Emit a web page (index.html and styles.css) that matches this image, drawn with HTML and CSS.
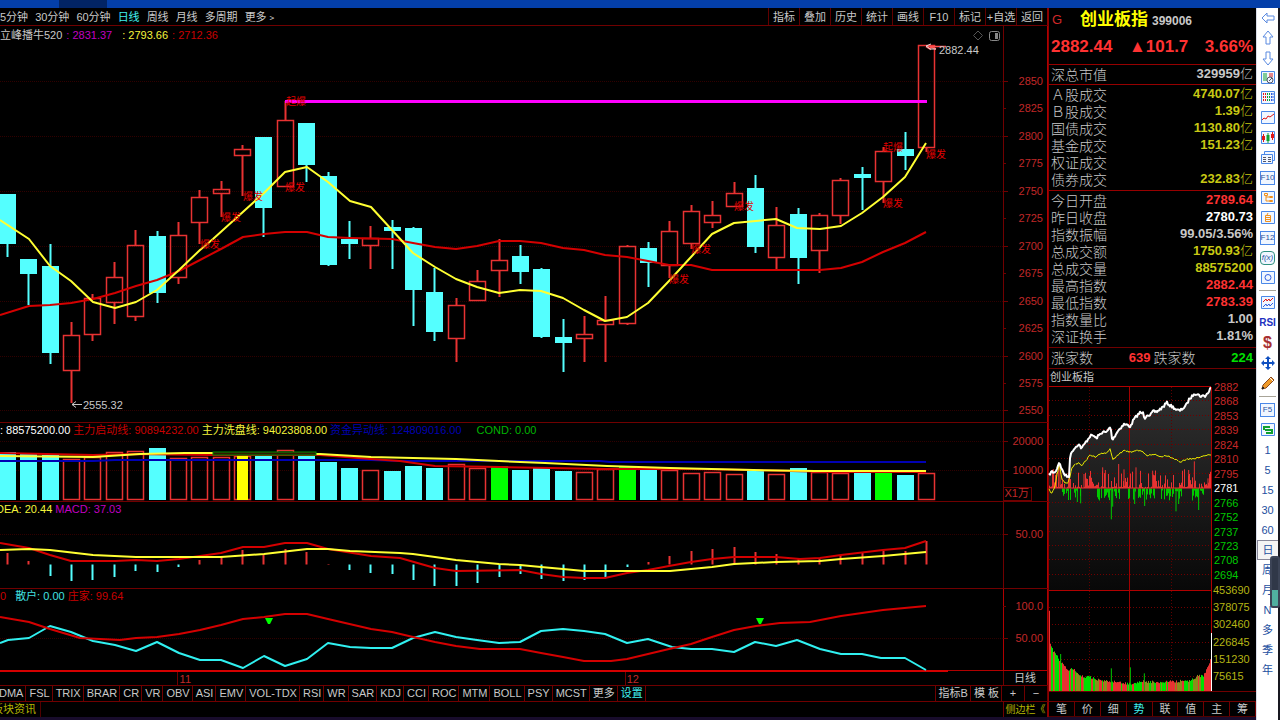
FILE: index.html
```html
<!DOCTYPE html>
<html lang="zh-CN">
<head>
<meta charset="utf-8">
<title>创业板指 399006</title>
<link rel="stylesheet" href="styles.css">
</head>
<body>
<header class="titlebar"><span class="titlebar-slot"></span></header>
<div class="workspace">
  <main class="charts">
    <nav class="topbar">
      <div class="periods">
        <button>5分钟</button><button>30分钟</button><button>60分钟</button><button class="active">日线</button><button>周线</button><button>月线</button><button>多周期</button><button>更多﹥</button>
      </div>
      <div class="tools">
        <button>指标</button><button>叠加</button><button>历史</button><button>统计</button><button>画线</button><button>F10</button><button>标记</button><button>+自选</button><button>返回</button>
      </div>
    </nav>

    <section class="panel">
      <div class="legend first"><span class="gray">立峰播牛520</span><span class="magenta">: 2831.37</span><span class="yellow wide">: 2793.66</span><span class="red">: 2712.36</span></div>
      <svg id="kline" viewBox="0 26 1048 396"></svg>
    </section>
    <section class="panel">
      <div class="legend"><span class="white">: 88575200.00</span><span class="red">主力启动线: 90894232.00</span><span class="yellow">主力洗盘线: 94023808.00</span><span class="blue">资金异动线: 124809016.00</span><span class="green wide">COND: 0.00</span></div>
      <svg id="volume" viewBox="0 422 1048 79"></svg>
    </section>
    <section class="panel">
      <div class="legend"><span class="yellow cut">DEA: 20.44</span><span class="magenta">MACD: 37.03</span></div>
      <svg id="macd" viewBox="0 501 1048 87"></svg>
    </section>
    <section class="panel">
      <div class="legend"><span class="red">0</span><span class="cyan near">散户: 0.00</span><span class="red">庄家: 99.64</span></div>
      <svg id="holders" viewBox="0 588 1048 97"></svg>
    </section>

    <nav class="indicators">
      <button class="cut">DMA</button><button>FSL</button><button>TRIX</button><button>BRAR</button><button>CR</button><button>VR</button><button>OBV</button><button>ASI</button><button>EMV</button><button>VOL-TDX</button><button>RSI</button><button>WR</button><button>SAR</button><button>KDJ</button><button>CCI</button><button>ROC</button><button>MTM</button><button>BOLL</button><button>PSY</button><button>MCST</button><button>更多</button><button class="active">设置</button>
      <span class="spacer"></span>
      <button class="start">指标B</button><button>模 板</button><button class="zoom">+</button><button class="zoom">−</button>
    </nav>
    <div class="status"><button class="news">板块资讯</button><button class="side">侧边栏《</button></div>
  </main>

  <aside class="quote">
    <div class="name"><span class="flag">G</span><h1>创业板指</h1><span class="code">399006</span></div>
    <div class="price"><span>2882.44</span><span>▲101.7</span><span>3.66%</span></div>
    <table class="rows">
      <tr><th>深总市值</th><td class="gray">329959<i>亿</i></td></tr>
    </table>
    <table class="rows six">
      <tr><th>Ａ股成交</th><td class="gold">4740.07<i>亿</i></td></tr>
      <tr><th>Ｂ股成交</th><td class="gold">1.39<i>亿</i></td></tr>
      <tr><th>国债成交</th><td class="gold">1130.80<i>亿</i></td></tr>
      <tr><th>基金成交</th><td class="gold">151.23<i>亿</i></td></tr>
      <tr><th>权证成交</th><td></td></tr>
      <tr><th>债券成交</th><td class="gold">232.83<i>亿</i></td></tr>
    </table>
    <table class="rows nine">
      <tr><th>今日开盘</th><td class="up">2789.64</td></tr>
      <tr><th>昨日收盘</th><td class="white">2780.73</td></tr>
      <tr><th>指数振幅</th><td class="gray">99.05/3.56%</td></tr>
      <tr><th>总成交额</th><td class="gold">1750.93<i>亿</i></td></tr>
      <tr><th>总成交量</th><td class="gold">88575200</td></tr>
      <tr><th>最高指数</th><td class="up">2882.44</td></tr>
      <tr><th>最低指数</th><td class="up">2783.39</td></tr>
      <tr><th>指数量比</th><td class="gray">1.00</td></tr>
      <tr><th>深证换手</th><td class="gray">1.81%</td></tr>
    </table>
    <div class="breadth"><span>涨家数</span><b class="up">639</b><span>跌家数</span><b class="down">224</b></div>
    <h2>创业板指</h2>
    <svg id="intraday" viewBox="1049 386 207 315"></svg>
    <nav class="views">
      <button>笔</button><button>价</button><button>细</button><button class="active">势</button><button>联</button><button>值</button><button>主</button><button>筹</button>
    </nav>
  </aside>

  <nav class="toolbar">
    <button aria-label="后退"><svg viewBox="0 0 16 16"><path d="M2 8l5-5v3h7v4H7v3z"/></svg></button>
    <button aria-label="上移"><svg viewBox="0 0 16 16"><path d="M8 1l5 6h-3v7H6V7H3z"/></svg></button>
    <button aria-label="下移"><svg viewBox="0 0 16 16"><path d="M8 15l5-6h-3V2H6v7H3z"/></svg></button>
    <button aria-label="报价设置"><svg viewBox="0 0 16 16"><path class="frame" d="M1.500 1.500h13v12h-13z"/><path class="g" d="M3 4h4M3 6h4M3 8h4M3 10h4"/><path class="r" d="M9 4h4M9 6h4"/><circle class="k" cx="10" cy="10" r="3"/><path class="k" d="M9 11l3-3"/></svg></button>
    <button aria-label="报价表"><svg viewBox="0 0 16 16"><path class="frame" d="M1.500 1.500h13v12h-13z"/><path class="r dash" d="M3.500 3v9M5.500 3v9"/><path class="g dash" d="M7.500 3v9M9.500 3v9"/><path class="b dash" d="M11.500 3v9M13 3v9"/></svg></button>
    <button aria-label="分时图"><svg viewBox="0 0 16 16"><path class="frame" d="M1.500 1.500h13v12h-13z"/><path class="r" d="M2 10l2-2 2 1 2-3 2 1 4-3"/></svg></button>
    <button aria-label="K线图"><svg viewBox="0 0 16 16"><path class="frame" d="M1.500 1.500h13v12h-13z"/><path class="r thick" d="M3.500 6v4M12.500 4v4"/><path class="g thick" d="M8 5v6"/><path class="r" d="M3.500 4v8M12.500 2v8"/><path class="g" d="M8 3v10"/></svg></button>
    <button aria-label="多窗口"><svg viewBox="0 0 16 16"><path class="frame" d="M4.500 4V1.500h10v9H12"/><path class="frame" d="M1.500 4.500h11v9h-11z"/><path class="k" d="M3 7.500h3M8 7.500h3M3 9.500h3M8 9.500h3M3 11.500h3M8 11.500h3"/></svg></button>
    <button class="boxed">F10</button>
    <button aria-label="板块树"><svg viewBox="0 0 16 16"><path class="frame" d="M1.500 1.500h13v12h-13z"/><path class="o" d="M4.500 3.500h3v2h-3zM9.500 6.500h3v1h-3zM9.500 10.500h3v1h-3zM6 6v5h3M6 7h3"/></svg></button>
    <button aria-label="自选股"><svg viewBox="0 0 16 16"><path class="frame" d="M1.500 1.500h13v12h-13z"/><path class="o" d="M5.500 5.500h5v6h-5zM5 7.500h6M5 9.500h6M8 3L7 5"/></svg></button>
    <button class="boxed">F12</button>
    <button class="boxed round fx">f(x)</button>
    <button aria-label="圆形"><svg viewBox="0 0 16 16"><path class="frame" d="M1.500 1.500h13v12h-13z"/><circle class="b" cx="8" cy="7.500" r="3"/></svg></button>
    <hr>
    <button aria-label="波形"><svg viewBox="0 0 16 16"><path class="frame" d="M1.500 1.500h13v12h-13z"/><path class="r" d="M3 7l3-3 1 2 2-2 1 2 3-3"/><path class="b" d="M3 12l3-3 1 2 2-2 1 2 3-3"/></svg></button>
    <button class="rsi">RSI</button>
    <button class="dollar">$</button>
    <button aria-label="移动"><svg viewBox="0 0 16 16"><path class="solid" d="M8 1l3 3H9v3h3V5l3 3-3 3V9H9v3h2l-3 3-3-3h2V9H4v2L1 8l3-3v2h3V4H5z"/></svg></button>
    <button aria-label="画笔"><svg viewBox="0 0 16 16"><path class="wood" d="M2 14l1-4 8-8 3 3-8 8z"/><path class="band" d="M10 3l3 3"/><path class="tip" d="M2 14l2-1-1-1z"/></svg></button>
    <hr class="tall">
    <button class="boxed">F5</button>
    <button aria-label="刷新"><svg viewBox="0 0 16 16"><path class="frame" d="M1.500 1.500h13v12h-13z"/><path class="g heavy" d="M4 8V5h6M12 7v4H6M5 8h6"/></svg></button>
    <button>1</button><button>5</button><button>15</button><button>30</button><button>60</button><button class="chosen">日</button><button>周</button><button>月</button><button>N</button><button>多</button><button>季</button><button>年</button>
    <span class="meter"></span>
  </nav>
</div>
<footer class="edge"></footer>
<script src="chart.js"></script>
</body>
</html>
```
FILE: styles.css
```css
* { box-sizing: border-box; }
body {
  margin: 0;
  min-height: 100vh;
  display: flex;
  flex-direction: column;
  background: #000;
  color: #c8c8c8;
  font: 11px/16px "Liberation Sans", "Noto Sans CJK SC", sans-serif;
}
button {
  margin: 0;
  padding: 0;
  border: 0;
  background: none;
  color: inherit;
  font: inherit;
  white-space: nowrap;
}
svg { display: block; }

.titlebar { height: 8px; padding-left: 59px; background: #043fa9; }
.titlebar-slot { display: block; width: 48px; height: 8px; background: #022465; }
.workspace { flex: 1; display: flex; }
.charts { flex: 1; min-width: 0; display: flex; flex-direction: column; }

.topbar { display: flex; justify-content: space-between; height: 18px; border-bottom: 1px solid #700000; }
.periods { display: flex; gap: 7px; }
.active { color: #40f0f0; }
.tools { display: flex; border-right: 1px solid #8c0000; }
.tools button { width: 31px; border-left: 1px solid #600000; }

.panel { position: relative; }
.panel svg { width: 100%; height: auto; }
.legend { position: absolute; top: 0; left: 0; display: flex; gap: 3px; white-space: nowrap; }
.legend.first { padding-top: 1px; gap: 4px; }
.legend .wide { margin-left: 12px; }
.legend .wide.yellow { margin-left: 6px; }
.legend .near { margin-left: 6px; }
.cut { margin-left: -4px; }

.gray { color: #c8c8c8; }
.white { color: #fff; }
.red { color: #c80000; }
.yellow { color: #f4f43c; }
.magenta { color: #c000c0; }
.blue { color: #0000b0; }
.green { color: #00b400; }
.cyan { color: #40e0e0; }
.gold { color: #c8c814; }
.up { color: #ff3232; }
.down { color: #00e000; }

.indicators { display: flex; height: 16px; border-top: 1px solid #700000; line-height: 15px; }
.indicators button { padding: 0 2px 0 3px; border-right: 1px solid #700000; }
.indicators .start { border-left: 1px solid #700000; }
.indicators .zoom { width: 23px; padding: 0; }
.spacer { flex: 1; }
.status { display: flex; justify-content: space-between; height: 16px; border-top: 1px solid #700000; color: #b4b400; line-height: 15px; }
.news { margin-left: -8px; padding-right: 4px; border-right: 1px solid #500000; }
.side { width: 45px; border-left: 1px solid #700000; border-right: 1px solid #8c0000; font-size: 10px; }

.quote { width: 208px; display: flex; flex-direction: column; border-left: 1px solid #8c0000; }
.name { display: flex; align-items: center; height: 24px; padding-left: 3px; gap: 4px; }
.flag { width: 24px; color: #d02828; font-size: 13px; }
h1 { margin: 0; color: #ffff00; font-size: 17px; line-height: 24px; }
.code { font-size: 12px; font-weight: bold; padding-top: 2px; }
.price { display: flex; justify-content: space-between; padding: 0 3px 0 2px; height: 32px; color: #ff3232; font-size: 17px; font-weight: bold; line-height: 30px; }
.rows { flex: none; width: 100%; border-collapse: separate; border-spacing: 0; border-top: 1px solid #960000; }
.rows tr { height: 17px; }
.rows th, .rows td { padding: 0; line-height: 14px; }
.rows th { padding-left: 2px; text-align: left; font-size: 14px; font-weight: 300; }
.rows td { padding-right: 3px; text-align: right; font-size: 13px; font-weight: bold; }
.rows i { font-style: normal; font-weight: 300; }
.rows th, .rows i { font-family: "Noto Sans CJK SC", sans-serif; }
.six { margin-top: 2px; }
.nine { margin-top: 3px; }
.breadth { flex: none; display: flex; height: 22px; margin-top: 3px; padding-left: 2px; border: 1px solid #700000; border-width: 1px 0; font: 300 14px/19px "Noto Sans CJK SC", sans-serif; }
.breadth b { flex: 1; text-align: right; font: bold 13px/19px "Liberation Sans", sans-serif; padding-right: 3px; }
h2 { margin: 0; padding-left: 1px; font-size: 11px; line-height: 17px; font-weight: normal; }
#intraday { width: 100%; height: auto; overflow: visible; }
.views { display: flex; height: 16px; border-top: 1px solid #700000; border-bottom: 1px solid #500000; line-height: 14px; }
.views button { flex: 1; border-right: 1px solid #700000; }

.toolbar { position: relative; width: 24px; display: flex; flex-direction: column; border-left: 1px solid #d8dce8; border-right: 2px solid #181820; background: #fff; color: #2450a0; margin-bottom: -3px; }
.toolbar button { display: flex; align-items: center; justify-content: center; height: 20px; }
.toolbar svg { width: 16px; height: 16px; fill: none; stroke: #5a8ae0; stroke-width: 1; }
.toolbar svg .frame { stroke: #4a88e8; fill: #f0f6ff; }
.toolbar svg .r { stroke: #e01818; }
.toolbar svg .g { stroke: #10a030; }
.toolbar svg .b { stroke: #3060e0; }
.toolbar svg .k { stroke: #556; }
.toolbar svg .o { stroke: #f0901c; }
.toolbar svg .dash { stroke-dasharray: 2 1; }
.toolbar svg .thick { stroke-width: 3; }
.toolbar svg .heavy { stroke-width: 2; }
.toolbar svg .solid { fill: #1050c0; stroke: none; }
.toolbar svg .wood { fill: #f09a28; stroke: #8a4a20; }
.toolbar svg .band { stroke: #fff; }
.toolbar svg .tip { fill: #222; stroke: #222; }
.toolbar .boxed { width: 15px; height: 14px; margin: 3px auto; border: 1px solid #4a88e8; font-size: 8px; background: #f0f6ff; }
.toolbar .round { border-radius: 4px; border-color: #309080; }
.toolbar .fx { font-style: italic; }
.toolbar .rsi { font-weight: bold; font-size: 10px; color: #2030c0; }
.toolbar .dollar { font-weight: bold; font-size: 16px; color: #a83030; }
.toolbar hr { width: 17px; height: 1px; margin: 2px auto; border: 0; background: #a8a498; }
.toolbar hr.tall { margin: 3px auto; }
.toolbar .chosen { border: 1px solid #889; border-right: 0; background: #f4f4f4; }
.meter { position: absolute; top: 548px; right: -2px; width: 10px; height: 52px; border-radius: 3px; border: 2px solid #3c4456; background: linear-gradient(#303848 66%, #50b0a0 66%); }
.edge { height: 3px; margin-right: 24px; background: #180c2c; }

svg text { font: 11px "Liberation Sans", "Noto Sans CJK SC", sans-serif; }
svg .axis { fill: #c02828; text-anchor: end; }
svg .note { fill: #c8c8c8; }
svg .mark { fill: #e00000; font-size: 10px; }
svg .grid { stroke: #300000; stroke-dasharray: 1 1; }
svg .rule { stroke: #700000; }
svg .bright { stroke: #b00000; }
svg .line { fill: none; stroke-width: 2; stroke-linejoin: round; }
svg .thin { fill: none; stroke-width: 1; }
```
FILE: chart.js
```js
const CYAN = '#54ffff', RED = '#e83232', YELLOW = '#ffff32', GREEN = '#00ff00';
const NS = 'http://www.w3.org/2000/svg';

function add(svg, tag, attrs, text) {
  const el = document.createElementNS(NS, tag);
  for (const k in attrs) el.setAttribute(k, attrs[k]);
  if (text !== undefined) el.textContent = text;
  svg.appendChild(el);
  return el;
}
const line = (s, x1, y1, x2, y2, a) => add(s, 'line', { x1, y1, x2, y2, ...a });
const poly = (s, points, stroke, cls = 'line') => add(s, 'polyline', { points, stroke, class: cls });
const rect = (s, x, y, width, height, a) => add(s, 'rect', { x, y, width, height, ...a });
const cx = i => Math.round(7 + 21.37 * i) + 0.5;

function frame(svg, top, bottom, cls = 'rule') {
  line(svg, 1003.5, top, 1003.5, bottom, { class: cls });
  line(svg, 1047.5, top, 1047.5, bottom, { class: 'bright' });
  line(svg, 0, top + 0.5, 1048, top + 0.5, { class: 'rule' });
}
function scale(svg, label, y, grid) {
  if (grid) line(svg, 0, y + 0.5, 1003, y + 0.5, { class: 'grid' });
  line(svg, 1003, y + 0.5, grid ? 1008 : 1006, y + 0.5, { class: 'rule' });
  add(svg, 'text', { x: 1043, y: y + 4, class: 'axis' }, label);
}

/* Daily candles: high, body top, body bottom, low, kind */
const candles = [
  [194,194,244,257,'c'],[259,259,274,305,'c'],[244,266,353,364,'c'],[322,335,370,403,'r'],[294,298,334,341,'r'],
  [262,277,302,324,'r'],[230,245,316,321,'r'],[231,236,293,303,'c'],[222,235,277,284,'r'],[190,197,222,244,'r'],
  [181,189,193,217,'r'],[145,149,155,196,'r'],[137,137,208,237,'c'],[101,120,186,186,'r'],[123,123,165,182,'c'],
  [172,176,265,266,'c'],[221,239,244,259,'c'],[226,238,245,269,'r'],[220,227,231,269,'c'],[227,228,290,326,'c'],
  [268,292,332,341,'c'],[298,305,338,362,'r'],[270,281,300,300,'r'],[239,260,270,297,'r'],[245,256,272,284,'c'],
  [268,269,337,338,'c'],[319,337,343,372,'c'],[316,334,338,362,'r'],[296,320,324,362,'r'],[245,246,323,325,'r'],
  [242,248,263,287,'c'],[221,231,265,278,'r'],[205,211,243,249,'r'],[201,215,222,228,'r'],[182,193,206,206,'r'],
  [175,188,247,253,'c'],[207,225,257,271,'r'],[208,214,258,284,'c'],[213,215,250,273,'r'],[178,180,215,224,'r'],
  [167,174,178,210,'c'],[147,151,181,203,'r'],[132,149,156,170,'c'],[45,45,147,152,'r']
];

const k = document.getElementById('kline');
frame(k, 25, 422);
for (let i = 0; i < 13; i++) scale(k, 2850 - 25 * i, Math.round(81 + 27.45 * i), i % 2 === 0);
candles.forEach(([h, t, b, l, kind], i) => {
  const x = cx(i);
  if (kind === 'c') {
    line(k, x, h, x, l, { stroke: CYAN, 'stroke-width': 2 });
    rect(k, x - 8.5, t, 17, b - t, { fill: CYAN });
  } else {
    line(k, x, h, x, t, { stroke: RED, 'stroke-width': 2 });
    line(k, x, b, x, l, { stroke: RED, 'stroke-width': 2 });
    rect(k, x - 8, t + 0.5, 16, Math.max(b - t, 3), { fill: 'none', stroke: RED, 'stroke-width': 1.5 });
  }
});
poly(k, '0,315 29,306 50,305 71,303 93,299 115,293 136,286 157,280 179,271 200,260 221,249 243,237 264,234 285,232 307,232 328,237 350,238 392,239 413,243 435,247 456,249 477,246 499,241 520,241 541,243 563,248 584,250 605,255 627,257 648,261 669,265 691,265 712,270 797,270 820,270 841,268 862,262 883,252 905,243 926,232', '#d40000');
poly(k, '0,220 29,239 50,266 71,281 93,302 115,308 136,302 157,290 179,270 200,250 213,239 264,193 285,172 307,167 328,182 350,201 371,207 392,230 413,253 435,267 456,279 477,287 499,293 520,290 541,291 563,298 584,310 605,321 627,317 648,303 669,281 691,257 712,234 734,223 776,219 797,228 820,229 841,226 862,213 883,197 905,177 926,143', YELLOW);
line(k, 285, 101.5, 927, 101.5, { stroke: '#ff00ff', 'stroke-width': 3 });
[[200,244],[221,217],[243,196],[285,187],[669,279],[691,249],[734,206],[883,203],[926,154]]
  .forEach(([x, y]) => add(k, 'text', { x, y: y + 4, class: 'mark' }, '爆发'));
[[286,101],[883,147]].forEach(([x, y]) => add(k, 'text', { x, y: y + 4, class: 'mark' }, '起爆'));
add(k, 'path', { d: 'M926 46.500h20M926 46.500l5 3M930 47l6 2', stroke: '#ff5050', fill: 'none', 'stroke-width': 1.5 });
add(k, 'path', { d: 'M926 46l5 -2M926 46l4 3h6', stroke: '#ddd', fill: 'none' });
add(k, 'text', { x: 939, y: 54, class: 'note' }, '2882.44');
add(k, 'path', { d: 'M72 404.500h10M72 404.500l4 -3M72 404.500l4 3', stroke: '#c8c8c8', fill: 'none' });
add(k, 'text', { x: 83, y: 409, class: 'note' }, '2555.32');
add(k, 'path', { d: 'M978 31l4.500 4.500-4.500 4.500-4.500-4.500z', stroke: '#555', fill: 'none' });
rect(k, 989.5, 31.5, 10, 9, { rx: 2, stroke: '#888', fill: 'none' });
rect(k, 995, 33, 3, 6, { fill: '#888' });

/* Volume: top of each bar; green bars mark signal days */
const v = document.getElementById('volume');
frame(v, 422, 501);
scale(v, '20000', 441, true);
scale(v, '10000', 470, true);
const vol = [452,454,455,459,457,452,451,448,458,457,457,456,455,450,455,462,468,470,471,466,468,464,468,466,470,468,471,472,469,467,470,470,473,472,474,471,474,468,472,473,473,471,475,473];
vol.forEach((y, i) => {
  const x = cx(i), kind = i === 23 || i === 29 || i === 41 ? 'g' : candles[i][4];
  if (kind === 'r') rect(v, x - 8, y + 0.5, 16, 499 - y, { fill: 'none', stroke: RED, 'stroke-width': 1.5 });
  else rect(v, x - 8.5, y, 17, 500 - y, { fill: kind === 'g' ? GREEN : CYAN });
  if (i === 11) rect(v, x - 5.5, y, 11, 500 - y, { fill: '#ffff00' });
});
poly(v, '0,461 93,461 115,460 371,460 400,461 600,461 610,462 926,462', '#0000b4');
poly(v, '0,453 93,455 135,454 213,455 320,455 371,459 400,461 435,466 500,467 605,469 690,469 755,470 830,472 926,472', '#d40000');
poly(v, '0,456 93,457 140,454 185,453 213,453 320,454 371,457 413,458 456,459 499,461 545,463 607,466 670,468 753,470 815,471 926,471', YELLOW);
rect(v, 213, 452, 103, 3, { fill: '#301800', stroke: '#008c00', 'stroke-width': 1 });
rect(v, 1003.5, 487.5, 28, 13, { fill: 'none', class: 'rule' });
add(v, 'text', { x: 1029, y: 497, class: 'axis' }, 'X1万');

/* MACD histogram ends, measured from the zero line */
const m = document.getElementById('macd');
frame(m, 501, 588);
scale(m, '50.00', 534, true);
const hist = [553,561,576,581,580,577,571,572,567,560,556,550,554,549,552,564,570,573,574,580,586,586,583,577,574,579,581,580,577,567,562,556,551,549,547,552,554,559,558,555,553,551,551,541];
hist.forEach((y, i) => line(m, cx(i), 564.5, cx(i), y, { stroke: y > 565 ? CYAN : RED, 'stroke-width': 2 }));
poly(m, '0,543 29,548 50,555 71,561 115,561 136,560 157,561 179,559 221,553 243,547 264,547 285,543 307,543 328,549 371,556 400,558 435,568 456,571 520,570 541,574 563,577 584,578 605,578 627,573 648,570 669,566 691,562 712,559 734,557 776,557 800,559 820,558 841,555 883,550 905,548 926,541', '#d40000');
poly(m, '0,550 29,549 50,550 93,555 136,557 221,557 264,554 307,549 328,549 350,551 400,553 413,554 435,557 456,560 499,564 520,565 541,567 563,569 584,571 670,571 712,567 734,564 776,562 820,561 841,559 883,556 926,552', YELLOW);

const h = document.getElementById('holders');
frame(h, 588, 671, 'bright');
line(h, 1047.5, 671, 1047.5, 685, { class: 'bright' });
line(h, 1003.5, 671, 1003.5, 685, { class: 'rule' });
scale(h, '100.0', 606, false);
scale(h, '50.00', 638, true);
line(h, 0, 671, 948, 671, { stroke: '#d40000', 'stroke-width': 2 });
line(h, 948, 670.5, 1048, 670.5, { class: 'bright' });
poly(h, '0,643 8,640 29,638 50,626 71,632 93,641 115,645 136,651 157,642 179,653 200,660 221,660 243,668 264,656 285,666 307,659 328,643 350,647 371,648 392,648 413,638 435,632 456,637 477,640 499,643 520,642 541,631 563,629 584,631 605,634 627,643 648,639 672,647 691,649 712,649 734,652 755,642 776,646 797,640 820,649 841,654 862,654 881,658 905,658 926,670', '#30f0f0');
poly(h, '0,617 29,622 50,629 80,638 120,640 136,638 157,637 179,634 200,630 221,625 243,619 264,617 285,614 307,614 328,619 371,629 392,632 413,637 435,642 456,646 480,649 520,649 541,653 563,657 584,661 611,661 627,659 648,654 669,649 691,644 712,637 734,630 756,626 780,623 810,622 841,616 883,610 926,606', '#d40000');
[269, 760].forEach(x => add(h, 'path', { d: `M${x - 4} 618h8l-3 6h-2z`, fill: GREEN }));
[[178, '11'], [626, '12']].forEach(([x, t]) => {
  line(h, x - 0.5, 672, x - 0.5, 685, { class: 'rule' });
  add(h, 'text', { x: x + 13, y: 683, class: 'axis' }, t);
});
add(h, 'text', { x: 1014, y: 682, class: 'note' }, '日线');

/* Intraday panel */
const d = document.getElementById('intraday');
const px = x => 1040 + x / 3;
let seed = 7;
const rnd = () => (seed = (seed * 16807) % 2147483647) / 2147483647;
function at(points, x) {
  for (let i = 1; i < points.length; i++) {
    const [x0, y0] = points[i - 1], [x1, y1] = points[i];
    if (x <= x1) return y0 + (y1 - y0) * (x - x0) / (x1 - x0);
  }
  return points[points.length - 1][1];
}
function wiggle(points, amp) {
  let out = '';
  for (let x = 27; x <= 513; x += 3) out += `${px(x).toFixed(1)},${(380 + (at(points, x) + (rnd() - 0.5) * amp) / 3).toFixed(1)} `;
  return out;
}
const price = [[26,285],[35,275],[45,278],[52,262],[58,245],[66,270],[75,285],[82,290],[88,288],[90,232],[97,212],[105,203],[115,192],[125,205],[135,190],[150,168],[160,166],[168,175],[178,165],[188,155],[198,158],[206,148],[212,140],[216,178],[222,172],[230,158],[240,145],[252,133],[262,135],[272,140],[280,120],[290,108],[300,98],[310,100],[314,115],[322,102],[330,108],[338,95],[350,95],[360,88],[370,80],[380,68],[390,76],[400,82],[410,90],[420,92],[430,84],[440,74],[448,56],[456,50],[462,40],[472,42],[480,48],[495,48],[505,38],[513,20]];
const mean = [[26,325],[35,340],[45,320],[52,280],[58,252],[66,300],[75,308],[82,310],[88,300],[95,262],[105,255],[115,248],[125,256],[135,246],[150,225],[165,230],[180,222],[200,218],[210,208],[218,238],[235,225],[250,212],[270,216],[290,210],[310,218],[320,228],[340,222],[360,230],[380,226],[395,232],[410,240],[422,246],[440,238],[460,235],[480,232],[495,228],[513,224]];
const pricePts = wiggle(price, 8);
const grad = add(add(d, 'defs', {}), 'linearGradient', { id: 'fade', x1: 0, y1: 0, x2: 0, y2: 1 });
add(grad, 'stop', { offset: 0, 'stop-color': '#303030' });
add(grad, 'stop', { offset: 1, 'stop-color': '#080808' });
add(d, 'polygon', { points: `${pricePts} 1211,590 1049,590`, fill: 'url(#fade)' });
const levels = [2882,2868,2853,2839,2824,2810,2795,2781,2766,2752,2737,2723,2708,2694];
levels.forEach((t, i) => {
  const y = Math.round(387 + 14.45 * i);
  line(d, 1049, y - 0.5, 1211, y - 0.5, i === 0 ? { class: 'bright' } : { stroke: '#700000', 'stroke-dasharray': '1 2' });
  add(d, 'text', { x: 1214, y: y + 4, fill: i < 7 ? '#c82828' : i === 7 ? '#fff' : '#00c800' }, t);
});
['453690','378075','302460','226845','151230','75615'].forEach((t, i) => {
  const y = Math.round(590 + 17.2 * i);
  line(d, 1049, y + 0.5, 1211, y + 0.5, i === 0 ? { class: 'bright' } : { stroke: '#700000', 'stroke-dasharray': '1 2' });
  add(d, 'text', { x: 1213, y: y + 4, fill: '#b4b414' }, t);
});
[1089.5, 1171.5].forEach(x => line(d, x, 387, x, 691, { stroke: '#600000', 'stroke-dasharray': '1 2' }));
line(d, 1129.5, 387, 1129.5, 691, { stroke: '#a00000' });

for (let x = 1049; x < 1211; x++) {
  const p = (x - 1040) * 3;
  const green = (p > 64 && p < 130) || (p > 170 && p < 240) || (p > 262 && p < 345) || (p > 360 && p < 425) || (p > 448 && p < 490);
  const r = rnd();
  if (!green || rnd() > 0.5) line(d, x + 0.5, 488, x + 0.5, 487 - r * r * r * 18, { stroke: RED });
  if (green && rnd() > 0.3) line(d, x + 0.5, 488.5, x + 0.5, 490 + rnd() * 11, { stroke: '#00c800' });
}
[[188,262],[196,270],[236,252],[252,268],[288,262],[338,272],[446,270],[463,244],[132,282],[504,295],[60,255],[56,262],[88,262]].forEach(([x, y]) => line(d, px(x), 488, px(x), 380 + y / 3, { stroke: RED }));
[[112,366],[122,370],[214,418],[218,380],[284,372],[314,378],[408,394],[416,372],[476,390]].forEach(([x, y]) => line(d, px(x), 488, px(x), 380 + y / 3, { stroke: '#00c800' }));
line(d, 1049, 488, 1211, 488, { stroke: RED });
poly(d, wiggle(mean, 5), '#e6e600', 'thin');
poly(d, pricePts, '#fff');

/* Minute turnover along the bottom */
const turnover = [[26,145],[30,280],[40,300],[60,330],[80,355],[100,352],[120,375],[150,378],[180,388],[200,388],[250,396],[270,398],[300,390],[350,392],[400,390],[450,388],[470,375],[490,372],[500,350],[513,320]];
const shades = [RED, '#00e000', '#8c8c1c', '#00e000', RED];
let color = RED;
for (let x = 1049; x < 1211; x++) {
  const p = (x - 1040) * 3;
  if (rnd() > 0.4) color = shades[Math.floor(rnd() * shades.length)];
  const top = 550 + (at(turnover, p) + rnd() * 8) / 3;
  rect(d, x, top, 1, 691 - top, { fill: p < 32 || p > 490 ? RED : color });
}
[[62,312],[214,355],[271,352],[313,370]].forEach(([x, y]) => line(d, px(x), 691, px(x), 550 + y / 3, { stroke: '#00c800' }));
line(d, 1211.5, 387, 1211.5, 691, { class: 'bright' });
line(d, 1211.5, 633, 1211.5, 691, { stroke: '#fff' });
line(d, 1049, 691.5, 1256, 691.5, { class: 'rule' });
```
